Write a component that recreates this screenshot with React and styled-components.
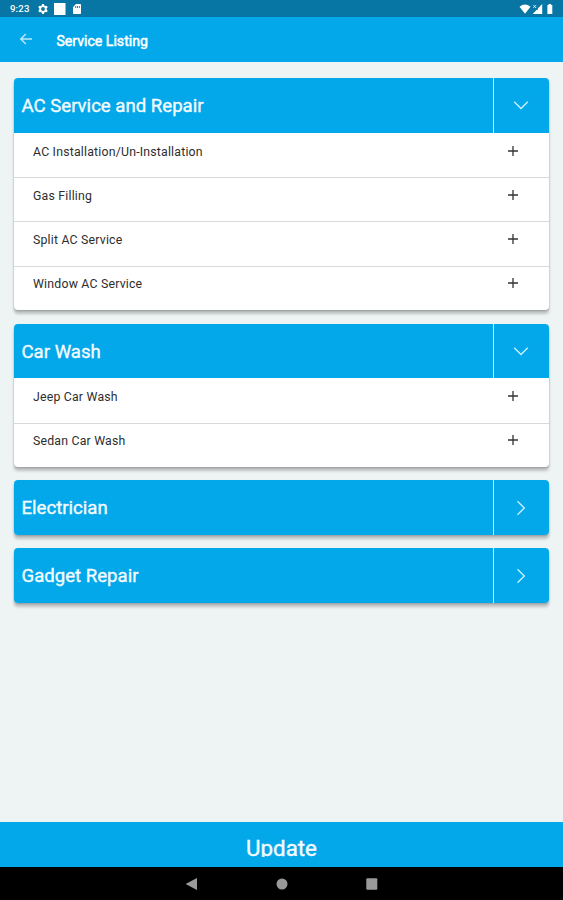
import React, { useState } from 'react';
import styled, { createGlobalStyle } from 'styled-components';

const GlobalStyle = createGlobalStyle`
    * {
        box-sizing: border-box;
    }

    body {
        margin: 0;
        background: #eef3f4;
        font-family: Roboto, "Liberation Sans", sans-serif;
    }
`;

const Screen = styled.div`
    display: flex;
    flex-direction: column;
    height: 100vh;
    overflow: hidden;
    background: #eef3f4;
`;

const StatusBar = styled.div`
    display: flex;
    flex-shrink: 0;
    align-items: center;
    height: 17px;
    padding: 1px 10px 0;
    background: #0876a5;
    color: #fff;
`;

const Clock = styled.span`
    width: 28px;
    font-size: 9.6px;
    font-weight: 500;
    letter-spacing: 0.15px;
    line-height: 16px;
`;

const StatusIcons = styled.svg`
    display: block;
    margin-left: ${props => props.$right ? 'auto' : '0'};
`;

const AppBar = styled.header`
    display: flex;
    flex-shrink: 0;
    align-items: center;
    height: 45px;
    padding: 0 19px;
    background: #03a8eb;
`;

const BackButton = styled.button`
    width: 37.5px;
    padding: 0;
    border: 0;
    background: none;
    text-align: left;

    svg {
        display: block;
        margin-top: -2px;
    }
`;

const PageTitle = styled.h1`
    margin: 3px 0 0;
    color: #fff;
    font-size: 14.1px;
    font-weight: 400;
    line-height: 18px;
    -webkit-text-stroke: 0.5px #fff;
`;

const List = styled.main`
    display: flex;
    flex: 1;
    flex-direction: column;
    gap: 13.4px;
    padding: 16px 14px;
`;

const Card = styled.section`
    border-radius: 4px;
    background: #fff;
    box-shadow: 0 4px 3px rgba(0, 0, 0, 0.2), 0 1px 2px rgba(0, 0, 0, 0.2);
`;

const CardHeader = styled.div`
    display: flex;
    height: 54.6px;
    border-radius: ${props => props.$open ? '4px 4px 0 0' : '4px'};
    overflow: hidden;
    background: #03a8eb;
    cursor: pointer;
`;

const CardTitle = styled.h2`
    flex: 1;
    margin: 0;
    padding: 1px 0 0 7.5px;
    color: #f4fbff;
    font-size: 18.6px;
    font-weight: 400;
    line-height: 55px;
    white-space: nowrap;
    -webkit-text-stroke: 0.35px #f4fbff;
`;

const Toggle = styled.div`
    display: flex;
    align-items: center;
    justify-content: center;
    width: 56.5px;
    padding-right: 1px;
    border-left: 1px solid #d8f1fc;
`;

const Row = styled.div`
    display: flex;
    justify-content: space-between;
    height: 44.4px;
    padding: 10px 30px 0 19px;
    color: #2d2d2d;

    & + & {
        padding-top: 8.6px;
        border-top: 1px solid #d7dada;
    }

    svg {
        display: block;
        margin-top: 2px;
    }
`;

const RowLabel = styled.span`
    font-size: 12.3px;
    letter-spacing: 0.2px;
    line-height: 18px;
`;

const UpdateButton = styled.button`
    flex-shrink: 0;
    height: 45px;
    padding: 0;
    border: 0;
    background: #03a8eb;
    color: #f4fbff;
    font-family: inherit;
`;

// the label box is shorter than its line, so descenders are cut off
const UpdateLabel = styled.span`
    display: block;
    height: 24px;
    overflow: hidden;
    font-size: 22.3px;
    font-weight: 400;
    line-height: 30px;
    -webkit-text-stroke: 0.4px #f4fbff;
`;

const NavBar = styled.nav`
    display: flex;
    flex-shrink: 0;
    align-items: center;
    justify-content: center;
    gap: 78px;
    height: 33px;
    background: #000;
`;

const services = [
    {
        name: 'AC Service and Repair',
        items: ['AC Installation/Un-Installation', 'Gas Filling', 'Split AC Service', 'Window AC Service'],
        open: true,
    },
    { name: 'Car Wash', items: ['Jeep Car Wash', 'Sedan Car Wash'], open: true },
    { name: 'Electrician', items: [], open: false },
    { name: 'Gadget Repair', items: [], open: false },
];

const Chevron = ({ open }) => (
    <svg width="16" height="16" viewBox="0 0 16 16" fill="none" stroke="#c9effc" strokeWidth="1.4">
        <path d={open ? 'M1.2 4.8L8 11.5L14.8 4.8' : 'M4.5 1.3L11.3 8L4.5 14.7'}/>
    </svg>
);

const Plus = () => (
    <svg width="12" height="12" viewBox="0 0 12 12" stroke="#333" strokeWidth="1.3">
        <path d="M1 6H11M6 1V11"/>
    </svg>
);

const ServiceCard = ({ service }) => {
    const [open, setOpen] = useState(service.open);

    return (
        <Card>
            <CardHeader $open={open} onClick={() => setOpen(!open)}>
                <CardTitle>{service.name}</CardTitle>
                <Toggle><Chevron open={open}/></Toggle>
            </CardHeader>
            {open && service.items.map(item => (
                <Row key={item}>
                    <RowLabel>{item}</RowLabel>
                    <Plus/>
                </Row>
            ))}
        </Card>
    );
};

const App = () => (
    <Screen>
        <GlobalStyle/>
        <StatusBar>
            <Clock>9:23</Clock>
            <StatusIcons width="46" height="16" viewBox="0 0 46 16" fill="#fff">
                <circle cx="5" cy="8" r="2.9" fill="none" stroke="#fff" strokeWidth="1.9"/>
                <path d="M5 3V4.8M5 11.2V13M.7 5.5L2.2 6.4M7.8 9.6L9.3 10.5M.7 10.5L2.2 9.6M7.8 6.4L9.3 5.5" stroke="#fff" strokeWidth="2"/>
                <rect x="16" y="2" width="11.5" height="12"/>
                <path fillRule="evenodd" d="M38 3H42.2Q43 3 43 3.8V12.2Q43 13 42.2 13H35.8Q35 13 35 12.2V6ZM37.3 5V7H38.2V5ZM39.1 5V7H40V5ZM40.9 5V7H41.8V5Z"/>
            </StatusIcons>
            <StatusIcons $right width="35" height="16" viewBox="0 0 35 16" fill="#fff">
                <path d="M1.5 5.8Q7 1.2 12.5 5.8L7 12.8Z"/>
                <path d="M24.2 3V13H14.7L18.8 8.8H20V7.2Z"/>
                <path d="M15.2 4L18.2 7M18.2 4L15.2 7" stroke="#fff" strokeWidth="0.8"/>
                <path d="M29.4 4H30.6V3H33.1V4H34.3V13H29.4Z"/>
            </StatusIcons>
        </StatusBar>
        <AppBar>
            <BackButton aria-label="Back">
                <svg width="14" height="12" viewBox="0 0 14 12" fill="none" stroke="#b9e8fb" strokeWidth="1.5">
                    <path d="M13 6H2M6.8 1L1.8 6L6.8 11"/>
                </svg>
            </BackButton>
            <PageTitle>Service Listing</PageTitle>
        </AppBar>
        <List>
            {services.map(service => <ServiceCard key={service.name} service={service}/>)}
        </List>
        <UpdateButton>
            <UpdateLabel>Update</UpdateLabel>
        </UpdateButton>
        <NavBar>
            <svg width="12" height="12" viewBox="0 0 12 12" fill="#999">
                <path d="M11 0V12L-0.5 6Z"/>
            </svg>
            <svg width="12" height="12" viewBox="0 0 12 12" fill="#999">
                <circle cx="6" cy="6" r="5.5"/>
            </svg>
            <svg width="12" height="12" viewBox="0 0 12 12" fill="#999">
                <rect x="0.3" y="0.3" width="11" height="11.4" rx="1"/>
            </svg>
        </NavBar>
    </Screen>
);

export default App;
